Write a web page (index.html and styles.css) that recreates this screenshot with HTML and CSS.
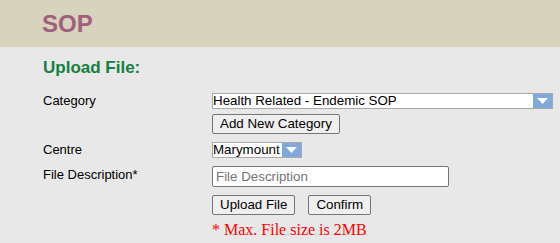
FILE: index.html
```html
<!DOCTYPE html>
<html>
<head>
    <meta charset="UTF-8">
    <title>SOP</title>
    <link rel="stylesheet" href="styles.css">
</head>
<body>
    <div class="page-header">
        <h1>SOP</h1>
    </div>

    <div class="content">
        <h2 class="section-title">Upload File:</h2>

        <div class="form">
            <div class="form-row">
                <div class="form-label">Category</div>
                <div class="form-field">
                    <div class="dropdown dropdown-wide">
                        <span class="dropdown-value">Health Related - Endemic SOP</span>
                        <span class="dropdown-arrow">
                            <svg width="11" height="6" viewBox="0 0 11 6"><polygon points="0,0 11,0 5.5,6" fill="#fff"/></svg>
                        </span>
                    </div>
                    <button class="btn btn-under">Add New Category</button>
                </div>
            </div>

            <div class="form-row row-centre">
                <div class="form-label">Centre</div>
                <div class="form-field">
                    <div class="dropdown">
                        <span class="dropdown-value">Marymount</span>
                        <span class="dropdown-arrow">
                            <svg width="11" height="6" viewBox="0 0 11 6"><polygon points="0,0 11,0 5.5,6" fill="#fff"/></svg>
                        </span>
                    </div>
                </div>
            </div>

            <div class="form-row row-desc">
                <div class="form-label">File Description*</div>
                <div class="form-field">
                    <input class="text-input" type="text" placeholder="File Description">
                </div>
            </div>

            <div class="form-row row-actions">
                <div class="form-label"></div>
                <div class="form-field actions">
                    <button class="btn">Upload File</button>
                    <button class="btn">Confirm</button>
                </div>
            </div>

            <div class="form-row row-note">
                <div class="form-label"></div>
                <div class="form-field">
                    <div class="size-note">* Max. File size is 2MB</div>
                </div>
            </div>
        </div>
    </div>
</body>
</html>
```

FILE: styles.css
```css
body, html {
    margin: 0;
    padding: 0;
    background: #e8e8e8;
    font-family: "Liberation Sans", Arial, sans-serif;
}

.page-header {
    height: 47px;
    background: #d8d3bc;  /* khaki band */
    padding-left: 42px;
}

.page-header h1 {
    margin: 0;
    font-size: 24px;
    line-height: 47px;
    font-weight: bold;
    color: #a0607c;
}

.content {
    padding: 0 43px;
}

.section-title {
    margin: 11px 0 0;
    font-size: 17px;
    line-height: 20px;
    font-weight: bold;
    color: #15803f;
}

.form {
    margin-top: 15px;
}

.form-row {
    display: grid;
    grid-template-columns: 169px auto;
}

.row-centre {
    margin-top: 8px;
}

.row-desc {
    margin-top: 6px;
}

.row-actions {
    margin-top: 8px;
}

.row-note {
    margin-top: 6px;
}

.form-label {
    font-size: 13px;
    line-height: 16px;
    color: #000;
}

.row-desc .form-label {
    padding-top: 1px;
}

/* fake select: white value box + blue arrow */
.dropdown {
    display: inline-flex;
    height: 14px;
    border: 1px solid #a9a9a9;
    background: #fff;
    vertical-align: top;
}

.dropdown-wide {
    display: flex;
    width: 339px;
}

.dropdown-value {
    flex: 1;
    font-size: 13.33px;
    line-height: 14px;
    color: #000;
    white-space: nowrap;
    padding-right: 2px;
}

.dropdown-arrow {
    width: 19px;
    background: #80a9db;
    display: flex;
    align-items: center;
    justify-content: center;
}

.btn {
    font-family: "Liberation Sans", Arial, sans-serif;
    font-size: 13.33px;
    line-height: 16px;
    height: 20px;
    padding: 1px 7px;
    margin: 0;
    border: 1px solid #767676;
    border-radius: 2px;
    background: #efefef;
    color: #000;
    box-sizing: border-box;
}

.btn-under {
    display: block;
    margin-top: 5px;
}

.actions {
    display: flex;
    gap: 13px;
}

.text-input {
    display: block;
    width: 237px;
    height: 21px;
    box-sizing: border-box;
    padding: 1px 3px 2px;
    margin: 0;
    font-family: "Liberation Sans", Arial, sans-serif;
    font-size: 13.33px;
    line-height: 16px;
    border: 1px solid #767676;
    border-radius: 2px;
    background: #fff;
}

.text-input::placeholder {
    color: #757575;
}

.size-note {
    font-family: "Liberation Serif", "Times New Roman", serif;
    font-size: 16px;
    color: #ff0000;
}
```
